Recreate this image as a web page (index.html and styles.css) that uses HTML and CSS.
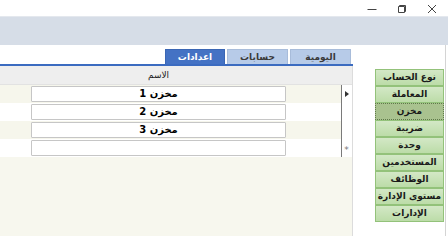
FILE: index.html
```html
<!DOCTYPE html>
<html lang="ar" dir="rtl">
<head>
<meta charset="utf-8">
<title>إعدادات</title>
<link rel="stylesheet" href="styles.css">
</head>
<body>
<div class="titlebar">
  <span class="ctl"><svg width="10" height="10" viewBox="0 0 10 10"><path d="M0.5 5.5H9.5" stroke="#444" stroke-width="1"/></svg></span>
  <span class="ctl"><svg width="10" height="10" viewBox="0 0 10 10"><path d="M2.5 2.5V1.5H8.5V7.5H7.5M1.5 2.5H7.5V8.5H1.5Z" stroke="#444" stroke-width="1" fill="none"/></svg></span>
  <span class="ctl"><svg width="10" height="10" viewBox="0 0 10 10"><path d="M1 1L9 9M9 1L1 9" stroke="#444" stroke-width="1"/></svg></span>
</div>
<div class="band"></div>
<div class="main">
  <aside class="side">
    <div class="side-inner">
      <div class="btn">نوع الحساب</div>
      <div class="btn">المعاملة</div>
      <div class="btn selected">مخزن</div>
      <div class="btn">ضريبة</div>
      <div class="btn">وحدة</div>
      <div class="btn">المستخدمين</div>
      <div class="btn">الوظائف</div>
      <div class="btn">مستوى الإدارة</div>
      <div class="btn">الإدارات</div>
    </div>
  </aside>
  <section class="content">
    <div class="tabs">
      <div class="tab">اليومية</div>
      <div class="tab">حسابات</div>
      <div class="tab active">اعدادات</div>
    </div>
    <div class="tabline"></div>
    <div class="grid">
      <div class="ghead">
        <div class="ghead-spacer"></div>
        <div class="ghead-col">الاسم</div>
      </div>
      <div class="grow alt">
        <div class="rowhead"><span class="arrow"></span></div>
        <div class="cellwrap"><div class="cell">مخزن 1</div></div>
      </div>
      <div class="grow">
        <div class="rowhead"></div>
        <div class="cellwrap"><div class="cell">مخزن 2</div></div>
      </div>
      <div class="grow alt">
        <div class="rowhead"></div>
        <div class="cellwrap"><div class="cell">مخزن 3</div></div>
      </div>
      <div class="grow">
        <div class="rowhead"><span class="star">*</span></div>
        <div class="cellwrap"><div class="cell"></div></div>
      </div>
      <div class="gfill"></div>
    </div>
  </section>
</div>
</body>
</html>
```

FILE: styles.css
```css
* { box-sizing: border-box; }
html, body {
  margin: 0;
  padding: 0;
  width: 448px;
  height: 236px;
  overflow: hidden;
  background: #ffffff;
  font-family: "DejaVu Sans", "Noto Sans", sans-serif;
}
.titlebar {
  direction: ltr;
  height: 16px;
  display: flex;
  justify-content: flex-end;
  align-items: center;
  padding-right: 1px;
  background: #ffffff;
}
.ctl {
  width: 30px;
  height: 16px;
  display: flex;
  align-items: center;
  justify-content: center;
  padding-top: 1px;
}
.band {
  height: 29px;
  background: #d6dde7;
  border-top: 1px solid #e4e8ee;
}
.main {
  display: flex;
  height: 191px;
}
.side {
  width: 95px;
  padding-right: 2px;
  background: #ffffff;
}
.side-inner {
  height: 100%;
  border-right: 1px solid #d4d4d4;
  padding-top: 24px;
  padding-right: 1px;
  display: flex;
  flex-direction: column;
  align-items: flex-start;
}
.btn {
  width: 69px;
  height: 17px;
  background: linear-gradient(#d3e8c6, #bcdca8);
  border: 1px solid #93c27a;
  color: #1a1a1a;
  font-weight: bold;
  font-size: 9px;
  line-height: 15px;
  text-align: center;
  white-space: nowrap;
}
.btn.selected {
  background: #a9c28f;
  border: 1px dotted #5f7a4a;
}
.content {
  flex: 1;
  display: flex;
  flex-direction: column;
}
.tabs {
  height: 19px;
  padding-top: 4px;
  padding-right: 2px;
  display: flex;
  gap: 2px;
}
.tab {
  width: 61px;
  height: 15px;
  background: #b7cbe8;
  border: 1px solid #a8bcda;
  border-bottom: none;
  color: #3a3a3a;
  font-size: 9px;
  font-weight: bold;
  line-height: 14px;
  text-align: center;
}
.tab.active {
  width: 60px;
  background: #4472c4;
  border-color: #3a66b4;
  color: #ffffff;
}
.tabline {
  height: 2px;
  background: #3b6bc0;
}
.grid {
  flex: 1;
  display: flex;
  flex-direction: column;
  border-right: 1px solid #dcdcdc;
  background: #f7f7ee;
}
.ghead {
  height: 19px;
  display: flex;
  background: #eeeeee;
  border-bottom: 1px solid #e2e2e2;
}
.ghead-spacer { width: 66px; }
.ghead-col {
  width: 255px;
  font-size: 9px;
  line-height: 18px;
  text-align: center;
  color: #222;
}
.grow {
  height: 18px;
  display: flex;
  background: #ffffff;
}
.grow.alt { background: #f6f6ec; }
.rowhead {
  width: 11px;
  background: #ffffff;
  border-left: 1px solid #7a7a7a;
  display: flex;
  align-items: center;
  justify-content: center;
  padding-right: 1px;
}
.arrow {
  width: 0;
  height: 0;
  border-top: 3px solid transparent;
  border-bottom: 3px solid transparent;
  border-left: 4px solid #333;
}
.star {
  font-size: 9px;
  color: #777;
  line-height: 10px;
  padding-top: 3px;
}
.cellwrap {
  padding-right: 55px;
  padding-top: 1px;
}
.cell {
  width: 255px;
  height: 16px;
  background: #ffffff;
  border: 1px solid #c6c6c6;
  border-radius: 1px;
  font-size: 10px;
  font-weight: bold;
  line-height: 14px;
  text-align: center;
  color: #000;
}
.gfill { flex: 1; }
```
